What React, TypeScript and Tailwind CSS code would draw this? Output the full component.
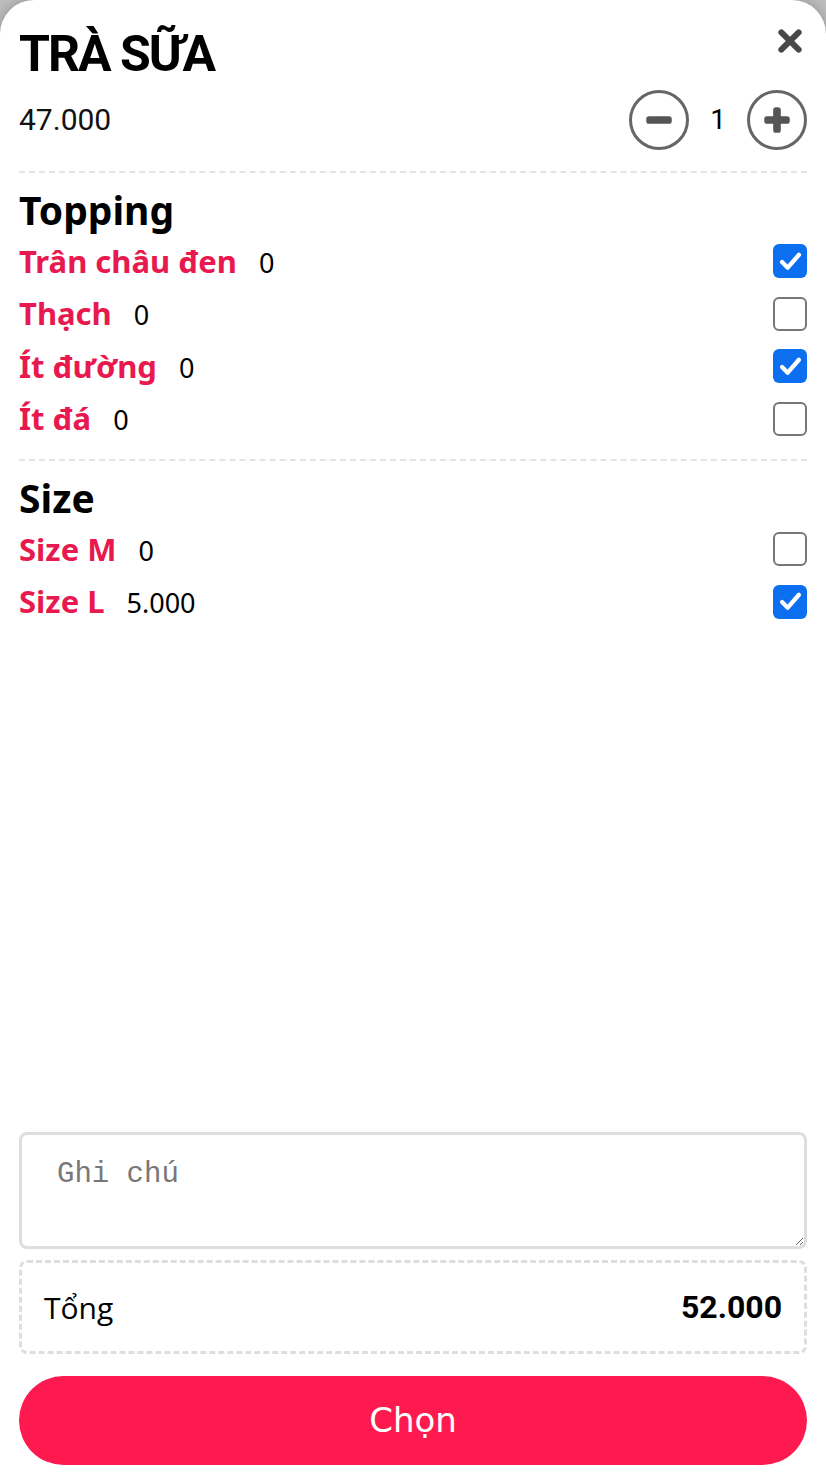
import { useState } from 'react'

type Option = { id: string; name: string; price: number }

const toppings: Option[] = [
  { id: 'tc', name: 'Trân châu đen', price: 0 },
  { id: 'th', name: 'Thạch', price: 0 },
  { id: 'id', name: 'Ít đường', price: 0 },
  { id: 'ia', name: 'Ít đá', price: 0 },
]

const sizes: Option[] = [
  { id: 'm', name: 'Size M', price: 0 },
  { id: 'l', name: 'Size L', price: 5000 },
]

const fmt = (n: number) => (n === 0 ? '0' : n.toLocaleString('de-DE'))

function Check({ checked, onClick }: { checked: boolean; onClick: () => void }) {
  return (
    <button
      type="button"
      onClick={onClick}
      aria-pressed={checked}
      className={`grid h-[34px] w-[34px] place-items-center rounded-[6px] ${
        checked ? 'bg-[#0b6ff0]' : 'border-[2.5px] border-[#777] bg-white'
      }`}
    >
      {checked && (
        <svg viewBox="0 0 24 24" width="27" height="27" fill="none">
          <path d="M4.5 12.5l5 5L19.5 6" stroke="#fff" strokeWidth="3.8" strokeLinecap="round" strokeLinejoin="round" />
        </svg>
      )}
    </button>
  )
}

function OptionRow({ opt, checked, toggle }: { opt: Option; checked: boolean; toggle: () => void }) {
  return (
    <div className="flex h-[52.5px] items-center justify-between">
      <div className="flex items-baseline gap-[22px]">
        <span className="font-['Noto_Sans'] text-[31px] font-bold leading-none text-[#e8194f]">{opt.name}</span>
        <span className="font-['Noto_Sans'] text-[27px] leading-none text-black">{fmt(opt.price)}</span>
      </div>
      <Check checked={checked} onClick={toggle} />
    </div>
  )
}

function RoundBtn({ plus }: { plus?: boolean }) {
  return (
    <button type="button" className="grid h-[60px] w-[60px] place-items-center rounded-full border-[3px] border-[#666]">
      <svg viewBox="0 0 24 24" width="34" height="34">
        <rect x="3" y="9.3" width="18" height="5.4" rx="2" fill="#555" />
        {plus && <rect x="9.3" y="3" width="5.4" height="18" rx="2" fill="#555" />}
      </svg>
    </button>
  )
}

export default function App() {
  const [qty] = useState(1)
  const [picked, setPicked] = useState<Record<string, boolean>>({ tc: true, id: true, l: true })
  const toggle = (id: string) => setPicked((p) => ({ ...p, [id]: !p[id] }))

  const extra = [...toppings, ...sizes].reduce((s, o) => s + (picked[o.id] ? o.price : 0), 0)
  const total = (47000 + extra) * qty

  return (
    <div className="h-[1473px] w-full bg-[#bdbdbd]">
      <div className="flex h-full flex-col rounded-t-[34px] bg-white px-[19px] pb-2 shadow-[0_0_12px_rgba(0,0,0,0.25)]">
        <div className="flex items-start justify-between pt-[29px]">
          <h1 className="font-['Roboto'] text-[50px] font-bold leading-none tracking-[-2px] text-black">TRÀ SỮA</h1>
          <button type="button" className="mr-[4px] mt-[-1px] text-[#484848]" aria-label="Đóng">
            <svg viewBox="0 0 24 24" width="26" height="26">
              <path d="M4 4l16 16M20 4L4 20" stroke="currentColor" strokeWidth="5.5" strokeLinecap="round" />
            </svg>
          </button>
        </div>

        <div className="mt-[11px] flex items-center justify-between border-b-2 border-dashed border-[#e4e4e4] pb-[21px]">
          <span className="font-['Roboto'] text-[30px] leading-none text-[#111]">47.000</span>
          <div className="flex items-center gap-[21px]">
            <RoundBtn />
            <span className="font-['Roboto'] text-[28px] leading-none text-black">{qty}</span>
            <RoundBtn plus />
          </div>
        </div>

        <section className="border-b-2 border-dashed border-[#e4e4e4] pb-[14px] pt-[14px]">
          <h2 className="font-['Noto_Sans'] text-[39px] font-bold leading-[46px] text-black">Topping</h2>
          <div className="mt-[2px]">
            {toppings.map((o) => (
              <OptionRow key={o.id} opt={o} checked={!!picked[o.id]} toggle={() => toggle(o.id)} />
            ))}
          </div>
        </section>

        <section className="pt-[14px]">
          <h2 className="font-['Noto_Sans'] text-[39px] font-bold leading-[46px] text-black">Size</h2>
          <div className="mt-[2px]">
            {sizes.map((o) => (
              <OptionRow key={o.id} opt={o} checked={!!picked[o.id]} toggle={() => toggle(o.id)} />
            ))}
          </div>
        </section>

        <div className="flex-1" />

        <textarea
          placeholder="Ghi chú"
          className="h-[117px] w-full resize-y rounded-[8px] border-[3px] border-[#dedede] px-[35px] pb-[20px] pt-[24px] font-['Liberation_Mono'] text-[29px] leading-[32px] outline-none placeholder:text-[#777]"
        />

        <div className="mt-[11px] flex h-[94px] items-center justify-between rounded-[8px] border-[3px] border-dashed border-[#dedede] px-[22px]">
          <span className="font-['Open_Sans'] text-[30px] text-black">Tổng</span>
          <span className="font-['Roboto'] text-[32px] font-bold text-black">{total.toLocaleString('de-DE')}</span>
        </div>

        <button
          type="button"
          className="mt-[22px] h-[89px] w-full rounded-full bg-[#fe1a4f] font-['DejaVu_Sans'] text-[34px] text-white"
        >
          Chọn
        </button>
      </div>
    </div>
  )
}
